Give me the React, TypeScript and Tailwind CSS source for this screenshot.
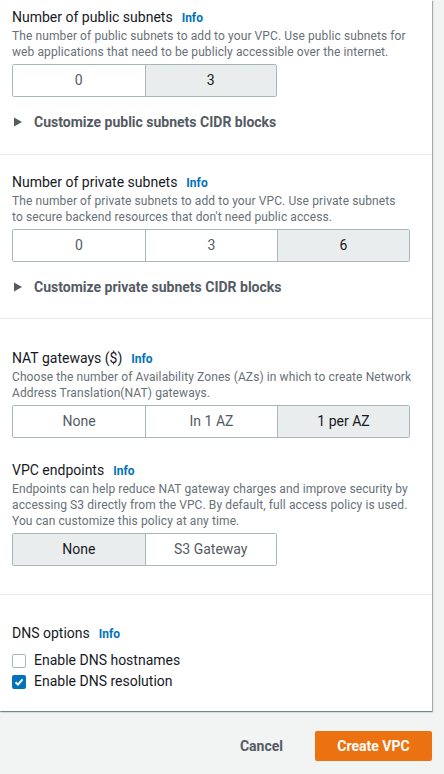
import { useState } from 'react'

const font = { fontFamily: 'Roboto, "Open Sans", Arial, sans-serif' }

function FieldLabel({ label }: { label: string }) {
  return (
    <div className="flex items-center h-[22px] text-[14px] leading-[22px] text-[#16191f]">
      <span>{label}</span>
      <span className="ml-[9px] mt-[1px] text-[12px] leading-[14px] font-bold text-[#0073bb]">Info</span>
    </div>
  )
}

function Description({ children, className = '' }: { children: React.ReactNode; className?: string }) {
  return <p className={`text-[12px] leading-[16px] tracking-[0.1px] text-[#687078] mb-[4px] ${className}`}>{children}</p>
}

function Segmented({ options, value, onChange }: { options: string[]; value: string; onChange: (v: string) => void }) {
  const width = options.length === 3 ? 'w-[398px] grid-cols-3' : 'w-[265px] grid-cols-2'
  return (
    <div className={`grid ${width} h-[33px] border border-[#aab7b8] rounded-[2px] overflow-hidden`}>
      {options.map((opt, i) => (
        <button
          key={opt}
          onClick={() => onChange(opt)}
          className={`text-[14px] ${i > 0 ? 'border-l border-[#aab7b8]' : ''} ${
            value === opt ? 'bg-[#eaeded] text-[#16191f]' : 'bg-white text-[#545b64]'
          }`}
        >
          {opt}
        </button>
      ))}
    </div>
  )
}

function Expander({ label }: { label: string }) {
  return (
    <div className="flex items-center gap-[12px] text-[14px] leading-[20px] font-bold text-[#545b64]">
      <svg width="8" height="10" viewBox="0 0 8 10" className="ml-[2px]">
        <path d="M0 0.5 L8 5 L0 9.5 Z" fill="#545b64" />
      </svg>
      <span>{label}</span>
    </div>
  )
}

function Checkbox({ label, checked, onToggle }: { label: string; checked: boolean; onToggle: () => void }) {
  return (
    <label className="flex items-center gap-[8px] text-[14px] leading-[21px] text-[#16191f] cursor-pointer" onClick={onToggle}>
      {checked ? (
        <span className="w-[14px] h-[14px] rounded-[2px] bg-[#0073bb] flex items-center justify-center">
          <svg width="10" height="10" viewBox="0 0 10 10">
            <path d="M1.5 5.2 L4 7.6 L8.5 2.3" stroke="white" strokeWidth="2" fill="none" />
          </svg>
        </span>
      ) : (
        <span className="w-[14px] h-[14px] rounded-[2px] border border-[#aab7b8] bg-white" />
      )}
      <span>{label}</span>
    </label>
  )
}

export default function App() {
  const [pub, setPub] = useState('3')
  const [priv, setPriv] = useState('6')
  const [nat, setNat] = useState('1 per AZ')
  const [endpoints, setEndpoints] = useState('None')
  const [hostnames, setHostnames] = useState(false)
  const [resolution, setResolution] = useState(true)

  return (
    <div className="min-h-screen bg-[#f2f3f3]" style={font}>
      <div className="w-[432px] bg-white shadow-[1px_1px_1px_0_rgba(0,28,36,0.3),0_1px_1px_0_rgba(0,28,36,0.3)]">
        {/* Public subnets */}
        <div className="px-3 pt-[6px] pb-[22px] border-b border-[#eaeded]">
          <FieldLabel label="Number of public subnets" />
          <Description>
            The number of public subnets to add to your VPC. Use public subnets for web applications that need to be publicly accessible over the internet.
          </Description>
          <Segmented options={['0', '3']} value={pub} onChange={setPub} />
          <div className="mt-[15px]">
            <Expander label="Customize public subnets CIDR blocks" />
          </div>
        </div>

        {/* Private subnets */}
        <div className="px-3 pt-[16px] pb-[21px] border-b border-[#eaeded]">
          <FieldLabel label="Number of private subnets" />
          <Description className="max-w-[392px]">
            The number of private subnets to add to your VPC. Use private subnets to secure backend resources that don't need public access.
          </Description>
          <Segmented options={['0', '3', '6']} value={priv} onChange={setPriv} />
          <div className="mt-[15px]">
            <Expander label="Customize private subnets CIDR blocks" />
          </div>
        </div>

        {/* NAT + endpoints */}
        <div className="px-3 pt-[28px] pb-[28px] border-b border-[#eaeded]">
          <FieldLabel label="NAT gateways ($)" />
          <Description>
            Choose the number of Availability Zones (AZs) in which to create Network Address Translation(NAT) gateways.
          </Description>
          <Segmented options={['None', 'In 1 AZ', '1 per AZ']} value={nat} onChange={setNat} />

          <div className="mt-[21px]">
            <FieldLabel label="VPC endpoints" />
          </div>
          <Description>
            Endpoints can help reduce NAT gateway charges and improve security by accessing S3 directly from the VPC. By default, full access policy is used. You can customize this policy at any time.
          </Description>
          <Segmented options={['None', 'S3 Gateway']} value={endpoints} onChange={setEndpoints} />
        </div>

        {/* DNS */}
        <div className="px-3 pt-[27px] pb-[19px]">
          <FieldLabel label="DNS options" />
          <div className="mt-[6px]">
            <Checkbox label="Enable DNS hostnames" checked={hostnames} onToggle={() => setHostnames(!hostnames)} />
            <Checkbox label="Enable DNS resolution" checked={resolution} onToggle={() => setResolution(!resolution)} />
          </div>
        </div>
      </div>

      {/* Footer */}
      <div className="w-[432px] flex items-center justify-end gap-[22px] pt-[20px]">
        <button className="text-[14px] font-bold text-[#545b64] px-[10px]">Cancel</button>
        <button className="h-[30px] w-[117px] rounded-[2px] bg-[#ec7211] text-white text-[14px] font-bold">Create VPC</button>
      </div>
    </div>
  )
}
